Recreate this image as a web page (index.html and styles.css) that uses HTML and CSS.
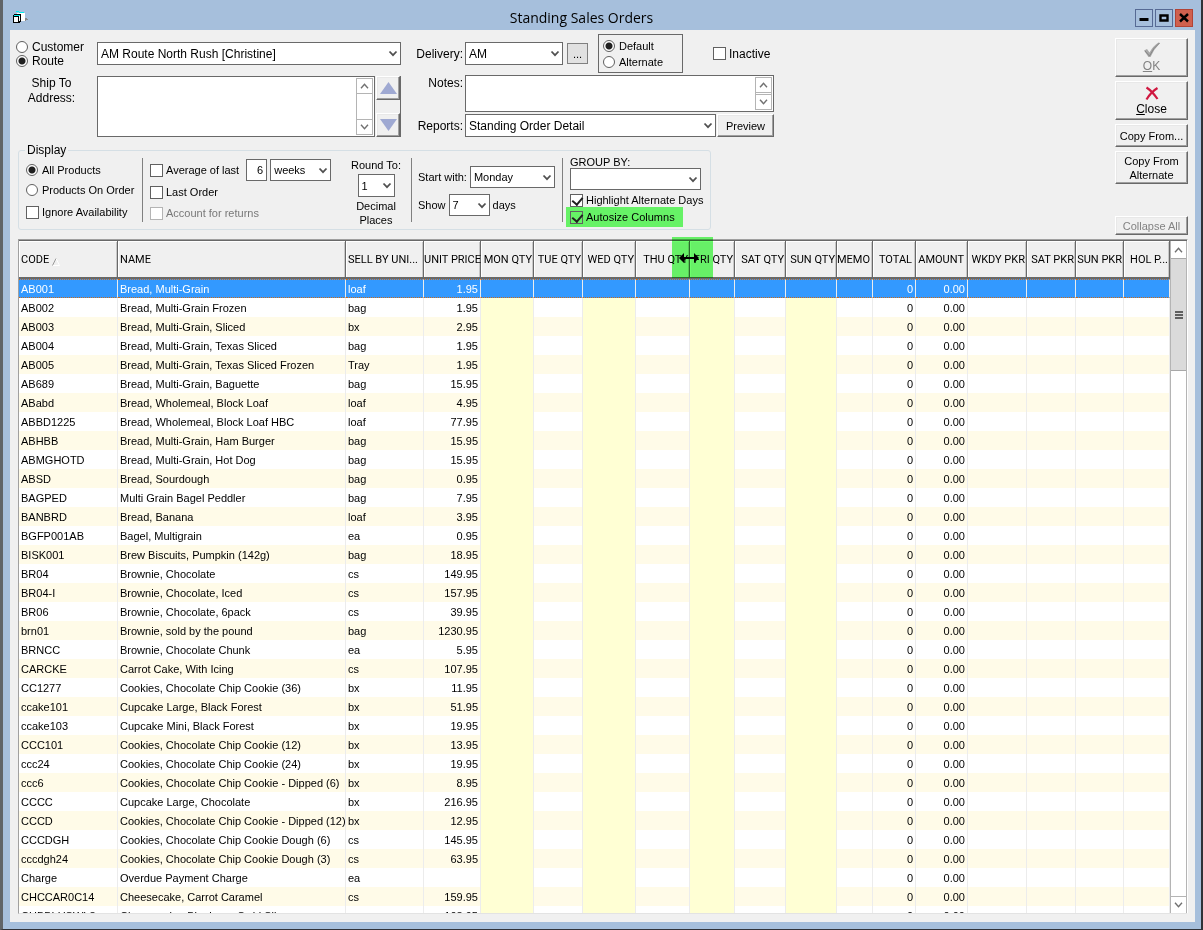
FILE: index.html
```html
<!DOCTYPE html>
<html lang="en">
<head>
<meta charset="utf-8">
<title>Standing Sales Orders</title>
<link rel="stylesheet" href="styles.css">
</head>
<body>
<svg class="defs" width="0" height="0" aria-hidden="true">
  <symbol id="chev" viewBox="0 0 10 8"><path d="M1.5 1.500 5 5.200 8.500 1.500" fill="none" stroke="#505050" stroke-width="1.800"/></symbol>
  <symbol id="up" viewBox="0 0 9 6"><path d="M1 5.2 4.5 1.4 8 5.2" fill="none" stroke="#707070" stroke-width="1.4"/></symbol>
  <symbol id="down" viewBox="0 0 9 6"><path d="M1 .8 4.5 4.6 8 .8" fill="none" stroke="#707070" stroke-width="1.4"/></symbol>
</svg>
<div class="window">
  <header class="titlebar">
    <svg class="app-icon" width="16" height="14" viewBox="0 0 16 14" shape-rendering="crispEdges" aria-hidden="true">
      <path d="M4 2H12V10H4z" fill="#fff"/>
      <path d="M3 0H6V1H3zM6 1H11V2H6z" fill="#00f0f0"/>
      <path d="M12 7H14V8H15V9H13V10H12z" fill="#888"/>
      <path d="M0 4H1V3H8V11H7V12H0z" fill="#000"/>
      <path d="M1 6H5V11H1zM6 5H7V10H6z" fill="#fff"/>
      <path d="M1 4H4V5H1zM4 4H7V5H4z" fill="#00f0f0"/>
    </svg>
    <h1>Standing Sales Orders</h1>
    <div class="window-buttons">
      <button type="button" aria-label="Minimize"><svg width="16" height="16" viewBox="0 0 16 16"><path d="M3.5 9.5H12.5" stroke="#000" stroke-width="3"/></svg></button>
      <button type="button" aria-label="Maximize"><svg width="16" height="16" viewBox="0 0 16 16"><path d="M4.5 5.5H11.5V10.5H4.5z" fill="none" stroke="#000" stroke-width="2.4"/></svg></button>
      <button type="button" class="close" aria-label="Close window"><svg width="16" height="16" viewBox="0 0 16 16"><path d="M4 4 12 11.5M12 4 4 11.5" stroke="#000" stroke-width="2.4"/></svg></button>
    </div>
  </header>
  <main class="content">
    <div class="top">
      <form class="form">
        <div class="party">
          <div class="owner">
            <div class="owner-kind">
              <label class="opt big"><input type="radio" name="kind">Customer</label>
              <label class="opt big"><input type="radio" name="kind" checked>Route</label>
            </div>
            <span class="select big"><select aria-label="Route"><option>AM Route North Rush [Christine]</option></select><svg width="10" height="8"><use href="#chev"/></svg></span>
            <label class="ship" for="address">Ship To<br>Address:</label>
            <div class="address-row">
              <div class="memo">
                <textarea id="address"></textarea>
                <div class="bar"><button type="button" aria-label="Scroll up"><svg width="9" height="6"><use href="#up"/></svg></button><button type="button" aria-label="Scroll down"><svg width="9" height="6"><use href="#down"/></svg></button></div>
              </div>
              <div class="spin">
                <button type="button" aria-label="Previous"><svg width="17" height="12" viewBox="0 0 17 12"><path d="M8.5 0 17 12H0z" fill="#9fa9d2"/></svg></button>
                <button type="button" aria-label="Next"><svg width="17" height="12" viewBox="0 0 17 12"><path d="M0 0H17L8.5 12z" fill="#9fa9d2"/></svg></button>
              </div>
            </div>
          </div>
          <div class="delivery">
            <label class="side" for="delivery">Delivery:</label>
            <div class="delivery-row">
              <span class="select big delivery-select"><select id="delivery"><option>AM</option></select><svg width="10" height="8"><use href="#chev"/></svg></span>
              <button type="button" class="more">...</button>
              <div class="address-kind">
                <label class="opt"><input type="radio" name="addr" checked>Default</label>
                <label class="opt"><input type="radio" name="addr">Alternate</label>
              </div>
              <label class="opt big inactive"><input type="checkbox">Inactive</label>
            </div>
            <label class="side first-line" for="notes">Notes:</label>
            <div class="memo">
              <textarea id="notes"></textarea>
              <div class="bar"><button type="button" aria-label="Scroll up"><svg width="9" height="6"><use href="#up"/></svg></button><button type="button" aria-label="Scroll down"><svg width="9" height="6"><use href="#down"/></svg></button></div>
            </div>
            <label class="side" for="reports">Reports:</label>
            <div class="reports-row">
              <span class="select big"><select id="reports"><option>Standing Order Detail</option></select><svg width="10" height="8"><use href="#chev"/></svg></span>
              <button type="button" class="btn preview">Preview</button>
            </div>
          </div>
        </div>
        <fieldset class="display">
          <legend>Display</legend>
          <div class="groups">
            <div class="group products">
              <label class="opt"><input type="radio" name="show" checked>All Products</label>
              <label class="opt"><input type="radio" name="show">Products On Order</label>
              <label class="opt ignore"><input type="checkbox">Ignore Availability</label>
            </div>
            <div class="rule"></div>
            <div class="group history">
              <div class="line">
                <label class="opt"><input type="checkbox">Average of last</label>
                <input class="count" type="text" value="6" aria-label="Number of periods">
                <span class="select weeks"><select aria-label="Period"><option>weeks</option></select><svg width="10" height="8"><use href="#chev"/></svg></span>
              </div>
              <label class="opt"><input type="checkbox">Last Order</label>
              <label class="opt off"><input type="checkbox" disabled>Account for returns</label>
            </div>
            <div class="group rounding">
              <label for="round">Round To:</label>
              <span class="select"><select id="round"><option>1</option></select><svg width="10" height="8"><use href="#chev"/></svg></span>
              <span>Decimal<br>Places</span>
            </div>
            <div class="rule"></div>
            <div class="group days">
              <div class="line"><label for="start">Start with:</label><span class="select start"><select id="start"><option>Monday</option></select><svg width="10" height="8"><use href="#chev"/></svg></span></div>
              <div class="line"><label for="span">Show</label><span class="select span"><select id="span"><option>7</option></select><svg width="10" height="8"><use href="#chev"/></svg></span><span>days</span></div>
            </div>
            <div class="rule"></div>
            <div class="group grouping">
              <label for="groupby">GROUP BY:</label>
              <span class="select"><select id="groupby"><option></option></select><svg width="10" height="8"><use href="#chev"/></svg></span>
              <label class="opt"><input type="checkbox" checked>Highlight Alternate Days</label>
              <label class="opt marked"><input type="checkbox" checked>Autosize Columns</label>
            </div>
          </div>
        </fieldset>
      </form>
      <div class="actions">
        <button type="button" class="btn large" disabled><svg width="18" height="16" viewBox="0 0 18 16"><path d="M1 8.5 4 7 6.5 10.5Q10 4 15.5.5L17 1Q11 7 7.500 15H5.500z" fill="#a8a8a8"/><path d="M2 9 6.500 14Q10 6 16.500 1" fill="none" stroke="#868686"/></svg><span><u>O</u>K</span></button>
        <button type="button" class="btn large"><svg width="14" height="15" viewBox="0 0 14 15"><path d="M1.500 1.500Q7 5 12.500 13M12.500 2Q6 6 1.500 13.500" fill="none" stroke="#d01840" stroke-width="2.200"/></svg><span><u>C</u>lose</span></button>
        <button type="button" class="btn">Copy From...</button>
        <button type="button" class="btn tall">Copy From Alternate</button>
        <button type="button" class="btn collapse" disabled>Collapse All</button>
      </div>
    </div>
    <section class="grid-frame">
      <div class="grid-body">
        <table>
          <colgroup><col class="c-code"><col><col class="c-unit"><col class="c-price"><col class="c-mon"><col class="c-tue"><col class="c-wed"><col class="c-thu"><col class="c-fri"><col class="c-sat"><col class="c-sun"><col class="c-memo"><col class="c-total"><col class="c-amount"><col class="c-wkdy"><col class="c-satp"><col class="c-sunp"><col class="c-hol"></colgroup>
          <thead>
            <tr><th>CODE <svg width="8" height="8" viewBox="0 0 8 8"><path d="M4 .5 7.500 7.500H.5" fill="none" stroke="#fff"/><path d="M.5 7.500 4 .5" stroke="#999"/></svg></th><th>NAME</th><th>SELL BY UNI...</th><th>UNIT PRICE</th><th>MON QTY</th><th>TUE QTY</th><th>WED QTY</th><th>THU QTY</th><th>FRI QTY</th><th>SAT QTY</th><th>SUN QTY</th><th>MEMO</th><th>TOTAL</th><th>AMOUNT</th><th>WKDY PKR</th><th>SAT PKR</th><th>SUN PKR</th><th>HOL P...</th></tr>
          </thead>
          <tbody>
            <tr class="selected"><td>AB001<td>Bread, Multi-Grain<td>loaf<td>1.95<td><td><td><td><td><td><td><td><td>0<td>0.00<td><td><td><td>
            <tr><td>AB002<td>Bread, Multi-Grain Frozen<td>bag<td>1.95<td><td><td><td><td><td><td><td><td>0<td>0.00<td><td><td><td>
            <tr><td>AB003<td>Bread, Multi-Grain, Sliced<td>bx<td>2.95<td><td><td><td><td><td><td><td><td>0<td>0.00<td><td><td><td>
            <tr><td>AB004<td>Bread, Multi-Grain, Texas Sliced<td>bag<td>1.95<td><td><td><td><td><td><td><td><td>0<td>0.00<td><td><td><td>
            <tr><td>AB005<td>Bread, Multi-Grain, Texas Sliced Frozen<td>Tray<td>1.95<td><td><td><td><td><td><td><td><td>0<td>0.00<td><td><td><td>
            <tr><td>AB689<td>Bread, Multi-Grain, Baguette<td>bag<td>15.95<td><td><td><td><td><td><td><td><td>0<td>0.00<td><td><td><td>
            <tr><td>ABabd<td>Bread, Wholemeal, Block Loaf<td>loaf<td>4.95<td><td><td><td><td><td><td><td><td>0<td>0.00<td><td><td><td>
            <tr><td>ABBD1225<td>Bread, Wholemeal, Block Loaf HBC<td>loaf<td>77.95<td><td><td><td><td><td><td><td><td>0<td>0.00<td><td><td><td>
            <tr><td>ABHBB<td>Bread, Multi-Grain, Ham Burger<td>bag<td>15.95<td><td><td><td><td><td><td><td><td>0<td>0.00<td><td><td><td>
            <tr><td>ABMGHOTD<td>Bread, Multi-Grain, Hot Dog<td>bag<td>15.95<td><td><td><td><td><td><td><td><td>0<td>0.00<td><td><td><td>
            <tr><td>ABSD<td>Bread, Sourdough<td>bag<td>0.95<td><td><td><td><td><td><td><td><td>0<td>0.00<td><td><td><td>
            <tr><td>BAGPED<td>Multi Grain Bagel Peddler<td>bag<td>7.95<td><td><td><td><td><td><td><td><td>0<td>0.00<td><td><td><td>
            <tr><td>BANBRD<td>Bread, Banana<td>loaf<td>3.95<td><td><td><td><td><td><td><td><td>0<td>0.00<td><td><td><td>
            <tr><td>BGFP001AB<td>Bagel, Multigrain<td>ea<td>0.95<td><td><td><td><td><td><td><td><td>0<td>0.00<td><td><td><td>
            <tr><td>BISK001<td>Brew Biscuits, Pumpkin (142g)<td>bag<td>18.95<td><td><td><td><td><td><td><td><td>0<td>0.00<td><td><td><td>
            <tr><td>BR04<td>Brownie, Chocolate<td>cs<td>149.95<td><td><td><td><td><td><td><td><td>0<td>0.00<td><td><td><td>
            <tr><td>BR04-I<td>Brownie, Chocolate, Iced<td>cs<td>157.95<td><td><td><td><td><td><td><td><td>0<td>0.00<td><td><td><td>
            <tr><td>BR06<td>Brownie, Chocolate, 6pack<td>cs<td>39.95<td><td><td><td><td><td><td><td><td>0<td>0.00<td><td><td><td>
            <tr><td>brn01<td>Brownie, sold by the pound<td>bag<td>1230.95<td><td><td><td><td><td><td><td><td>0<td>0.00<td><td><td><td>
            <tr><td>BRNCC<td>Brownie, Chocolate Chunk<td>ea<td>5.95<td><td><td><td><td><td><td><td><td>0<td>0.00<td><td><td><td>
            <tr><td>CARCKE<td>Carrot Cake, With Icing<td>cs<td>107.95<td><td><td><td><td><td><td><td><td>0<td>0.00<td><td><td><td>
            <tr><td>CC1277<td>Cookies, Chocolate Chip Cookie (36)<td>bx<td>11.95<td><td><td><td><td><td><td><td><td>0<td>0.00<td><td><td><td>
            <tr><td>ccake101<td>Cupcake Large, Black Forest<td>bx<td>51.95<td><td><td><td><td><td><td><td><td>0<td>0.00<td><td><td><td>
            <tr><td>ccake103<td>Cupcake Mini, Black Forest<td>bx<td>19.95<td><td><td><td><td><td><td><td><td>0<td>0.00<td><td><td><td>
            <tr><td>CCC101<td>Cookies, Chocolate Chip Cookie (12)<td>bx<td>13.95<td><td><td><td><td><td><td><td><td>0<td>0.00<td><td><td><td>
            <tr><td>ccc24<td>Cookies, Chocolate Chip Cookie (24)<td>bx<td>19.95<td><td><td><td><td><td><td><td><td>0<td>0.00<td><td><td><td>
            <tr><td>ccc6<td>Cookies, Chocolate Chip Cookie - Dipped (6)<td>bx<td>8.95<td><td><td><td><td><td><td><td><td>0<td>0.00<td><td><td><td>
            <tr><td>CCCC<td>Cupcake Large, Chocolate<td>bx<td>216.95<td><td><td><td><td><td><td><td><td>0<td>0.00<td><td><td><td>
            <tr><td>CCCD<td>Cookies, Chocolate Chip Cookie - Dipped (12)<td>bx<td>12.95<td><td><td><td><td><td><td><td><td>0<td>0.00<td><td><td><td>
            <tr><td>CCCDGH<td>Cookies, Chocolate Chip Cookie Dough (6)<td>cs<td>145.95<td><td><td><td><td><td><td><td><td>0<td>0.00<td><td><td><td>
            <tr><td>cccdgh24<td>Cookies, Chocolate Chip Cookie Dough (3)<td>cs<td>63.95<td><td><td><td><td><td><td><td><td>0<td>0.00<td><td><td><td>
            <tr><td>Charge<td>Overdue Payment Charge<td>ea<td><td><td><td><td><td><td><td><td><td>0<td>0.00<td><td><td><td>
            <tr><td>CHCCAR0C14<td>Cheesecake, Carrot Caramel<td>cs<td>159.95<td><td><td><td><td><td><td><td><td>0<td>0.00<td><td><td><td>
            <tr><td>CHBBLUSWL8<td>Cheesecake, Blueberry Swirl Slice<td>cs<td>108.95<td><td><td><td><td><td><td><td><td>0<td>0.00<td><td><td><td>
          </tbody>
        </table>
      </div>
      <div class="scroll">
        <button type="button" aria-label="Scroll up"><svg width="9" height="6"><use href="#up"/></svg></button>
        <div class="thumb"><svg width="8" height="8" viewBox="0 0 8 8"><path d="M0 1H8M0 4H8M0 7H8" stroke="#606060" stroke-width="2"/></svg></div>
        <button type="button" class="end" aria-label="Scroll down"><svg width="9" height="6"><use href="#down"/></svg></button>
      </div>
      <div class="resize-mark"></div>
      <svg class="resize-cursor" width="20" height="10" viewBox="0 0 20 10" aria-hidden="true"><path d="M0 5 5 0V4H15V0L20 5 15 10V6H5V10z" fill="#000"/></svg>
    </section>
  </main>
</div>
</body>
</html>
```
FILE: styles.css
```css
* { box-sizing: border-box; }
body {
  margin: 0;
  font: 11px/14px "Liberation Sans", Arial, sans-serif;
  color: #000;
}
button, input, select, textarea { font: inherit; color: inherit; margin: 0; }
.defs { position: absolute; }

.window {
  height: 100vh;
  display: flex;
  flex-direction: column;
  background: #a6bfdc;
  border: solid #303238;
  border-width: 0 2px 1px 3px;
  border-left-color: #606468;
  padding: 0 6px 7px 7px;
}
.titlebar {
  height: 30px;
  flex: none;
  display: grid;
  grid-template-columns: 1fr auto 1fr;
  align-items: center;
  padding-top: 6px;
}
.titlebar h1 {
  margin: 0 42px 0 0;
  font: 14px/20px "Open Sans", "Noto Sans", sans-serif;
}
.app-icon { margin-left: 3px; }
.window-buttons { display: flex; gap: 2px; justify-content: flex-end; padding-right: 2px; }
.window-buttons button {
  width: 18px;
  height: 18px;
  padding: 0;
  border: 1px solid #566a94;
  background: #a6bfdc;
}
.window-buttons svg { display: block; }
.window-buttons .close { background: #d0604e; border-color: #b24335; }

.content {
  flex: 1;
  min-height: 0;
  background: #f0f0f0;
  display: flex;
  flex-direction: column;
  padding: 4px 7px 8px 6px;
}
.top { display: flex; justify-content: space-between; }
.form { flex: none; }
.party { display: flex; }

/* radios and tick boxes */
.opt { display: flex; align-items: center; gap: 4px; white-space: nowrap; }
.opt input {
  appearance: none;
  flex: none;
  width: 13px;
  height: 13px;
  border: 1px solid #606060;
  background: #fff;
}
.opt input[type="radio"] { width: 12px; height: 12px; border-radius: 50%; }
.opt input[type="radio"]:checked { background: radial-gradient(circle, #202020 3px, #fff 4px); }
.opt input[type="checkbox"]:checked::after {
  content: "";
  display: block;
  width: 5px;
  height: 8px;
  margin: 0 0 0 3px;
  border: solid #202020;
  border-width: 0 2px 2px 0;
  rotate: 40deg;
}
.opt.off { color: #787878; }
.opt.off input { border-color: #b4b4b4; }
.big { font-size: 12px; }

/* drop-downs */
.select { position: relative; display: block; height: 22px; }
.select.big { height: 23px; }
.select select {
  appearance: none;
  display: block;
  width: 100%;
  height: 100%;
  padding: 0 18px 0 3px;
  border: 1px solid #696969;
  border-radius: 0;
  background: #fff;
}
.select svg { position: absolute; right: 3px; top: 8px; pointer-events: none; }

/* multi-line boxes */
.memo { display: flex; border: 1px solid #696969; background: #fff; padding: 1px; }
.memo textarea { flex: 1; min-width: 0; height: 100%; border: 0; padding: 1px; resize: none; background: none; }
.bar {
  width: 17px;
  display: flex;
  flex-direction: column;
  justify-content: space-between;
  border: 1px solid #b4b4b4;
}
.bar button { height: 15px; padding: 0; border: 0; background: #fff; display: grid; place-items: center; }
.bar button:first-child { border-bottom: 1px solid #b4b4b4; }
.bar button:last-child { border-top: 1px solid #b4b4b4; }

/* raised buttons */
.btn, .spin button {
  border: 1px solid;
  border-color: #fff #696969 #696969 #fff;
  box-shadow: inset -1px -1px #a0a0a0, inset 1px 1px #e8e8e8;
  background: #f0f0f0;
  padding: 0;
}
.btn:disabled { color: #838383; }

.owner {
  display: grid;
  grid-template: 23px 61px / 71px 304px;
  gap: 11px 10px;
  padding-top: 8px;
}
.owner-kind { display: flex; flex-direction: column; align-self: center; }
.ship { font-size: 12px; line-height: 15px; text-align: center; }
.address-row { display: flex; gap: 1px; }
.address-row .memo { flex: 1; }
.spin { width: 25px; display: flex; flex-direction: column; justify-content: space-between; border-right: 1px solid #696969; }
.spin button { height: 24px; display: grid; place-items: center; }

.delivery {
  display: grid;
  grid-template: 39px 37px 23px / 62px 309px;
  gap: 2px;
}
.side { font-size: 12px; text-align: right; align-self: center; }
.side.first-line { align-self: start; padding-top: 1px; }
.delivery-row { display: flex; align-items: center; }
.delivery-select { width: 98px; margin-right: 4px; }
.more { width: 21px; height: 21px; padding: 0; border: 1px solid #808080; background: #e1e1e1; }
.address-kind {
  width: 85px;
  height: 39px;
  margin: 0 30px 0 10px;
  padding: 0 4px;
  border: 1px solid #696969;
  display: flex;
  flex-direction: column;
  justify-content: center;
  gap: 2px;
}
.inactive { gap: 3px; }
.reports-row { display: flex; gap: 1px; }
.reports-row .select { flex: 1; }
.preview { width: 57px; }

.display {
  width: 692px;
  margin: 6px 0 0 2px;
  padding: 0 7px;
  border: 1px solid #d5dfe5;
  border-radius: 3px;
}
.display legend { padding: 0 2px; font-size: 12px; margin-left: -1px; }
.groups { display: flex; height: 72px; }
.rule { width: 1px; height: 64px; margin-top: 1px; background: #808080; flex: none; }
.line { display: flex; align-items: center; gap: 3px; }
.products { width: 116px; padding-top: 6px; display: flex; flex-direction: column; gap: 6px; }
.products .ignore { gap: 3px; padding-top: 2px; }
.history { width: 200px; padding: 2px 0 0 7px; display: flex; flex-direction: column; gap: 5px; }
.history .opt { gap: 3px; height: 16px; }
.history .line { height: 22px; margin-bottom: -2px; }
.history .line .opt { margin-right: 4px; }
.count { width: 21px; height: 22px; border: 1px solid #696969; padding: 0 3px; text-align: right; }
.weeks { width: 61px; }
.rounding { width: 68px; padding: 1px 2px 0 0; display: flex; flex-direction: column; align-items: center; gap: 2px; text-align: center; }
.rounding .select { width: 37px; height: 23px; }
.days { width: 150px; padding: 9px 0 0 6px; display: flex; flex-direction: column; gap: 6px; }
.start { width: 85px; }
.span { width: 41px; }
.grouping { padding-left: 7px; width: 140px; line-height: 11px; white-space: nowrap; }
.grouping > label:first-child { display: block; }
.grouping .select { width: 131px; margin-bottom: 4px; }
.grouping .opt { gap: 3px; height: 13px; }
.grouping .opt.marked { height: 20px; width: 117px; padding-left: 4px; margin-left: -4px; background: #66f266; }
.marked input { background: #66f266; }

.actions { width: 73px; padding-top: 4px; display: flex; flex-direction: column; gap: 4px; }
.actions .btn { height: 23px; }
.actions .large {
  height: 39px;
  display: flex;
  flex-direction: column;
  align-items: center;
  justify-content: center;
  gap: 1px;
  font-size: 12px;
}
.actions .tall { height: 33px; }
.actions .collapse { height: 19px; margin-top: 28px; }

/* order grid */
.grid-frame {
  position: relative;
  flex: 1;
  min-height: 0;
  margin: 4px 0 0 2px;
  display: flex;
  border: 1px solid;
  border-color: #a0a0a0 #fff #e3e3e3 #a0a0a0;
  box-shadow: inset 0 1px #696969;
  padding-top: 1px;
  background: #fff;
}
.grid-body { flex: 1; min-width: 0; overflow: hidden; }
table { width: 100%; table-layout: fixed; border-collapse: separate; border-spacing: 0; }
.c-code { width: 99px; }
.c-unit { width: 78px; }
.c-price { width: 57px; }
.c-mon, .c-wed { width: 53px; }
.c-tue, .c-satp { width: 49px; }
.c-thu { width: 54px; }
.c-fri { width: 45px; }
.c-sat, .c-sun { width: 51px; }
.c-memo { width: 36px; }
.c-total { width: 43px; }
.c-amount { width: 52px; }
.c-wkdy { width: 59px; }
.c-sunp { width: 48px; }
.c-hol { width: 46px; }
th {
  height: 38px;
  padding: 2px 2px 0;
  background: #f0f0f0;
  border: solid #696969;
  border-width: 0 1px 2px 0;
  box-shadow: inset 1px 1px #fff, inset -1px 0 #c8c8c8;
  font-family: Roboto, "Liberation Sans", sans-serif;
  font-weight: normal;
  text-align: left;
  white-space: nowrap;
}
th svg { vertical-align: -3px; }
td {
  height: 19px;
  padding: 0 2px;
  border-right: 1px solid #ececec;
  white-space: nowrap;
}
th:nth-child(n+4) { text-align: right; padding: 2px 1px 0 0; }
th:nth-child(n+12):nth-child(-n+14) { padding-right: 3px; }
th:nth-child(4) { padding-right: 0; }
td:nth-child(n+4) { text-align: right; }
tbody tr:nth-child(odd) { background: #fffbe8; }
tbody tr:not(.selected) td:is(:nth-child(5), :nth-child(7), :nth-child(9), :nth-child(11)) { background: #ffffd4; }
tbody tr.selected { background: #3399ff; color: #fff; }
.selected td { border-top: 1px dotted #c66a20; border-bottom: 1px dotted #c66a20; }
.scroll {
  width: 17px;
  flex: none;
  display: flex;
  flex-direction: column;
  border: solid #b4b4b4;
  border-width: 0 1px;
}
.scroll button { height: 17px; padding: 0; border: 0; background: #fff; display: grid; place-items: center; }
.scroll .end { margin-top: auto; border-top: 1px solid #b4b4b4; }
.thumb { height: 113px; display: grid; place-items: center; background: #dadada; border: solid #a8a8a8; border-width: 1px 0; }
.resize-mark {
  position: absolute;
  top: -3px;
  right: 474px;
  width: 41px;
  height: 41px;
  background: #6dff6d;
  mix-blend-mode: multiply;
}
.resize-cursor { position: absolute; top: 13px; right: 488px; }
```
